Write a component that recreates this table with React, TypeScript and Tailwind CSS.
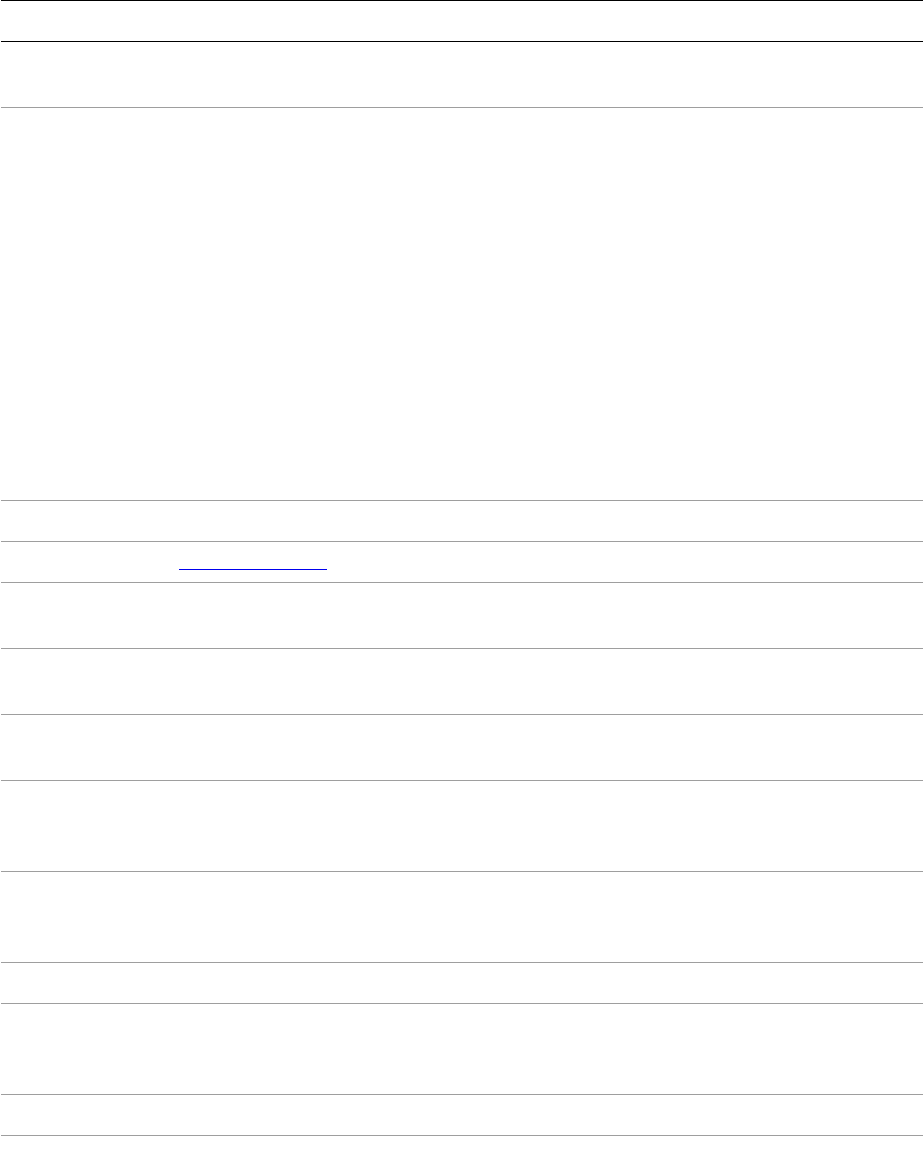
import React from 'react';

// row heights in px, each including its bottom rule
const rows = [66, 393, 41, 41, 66, 66, 66, 91, 91, 41, 91, 41];

const Row = ({ h, children }: { h: number; children?: React.ReactNode }) => (
  <div className="box-border flow-root border-b border-[#9e9e9e]" style={{ height: h }}>
    {children}
  </div>
);

const App: React.FC = () => {
  return (
    <div className="min-h-[1174px] bg-white pl-px font-['Liberation_Sans',Arial,sans-serif] text-base text-white">
      <div className="box-border h-[42px] border-y border-black" />
      {rows.map((h, i) =>
        i === 3 ? (
          <Row key={i} h={h}>
            <div className="pl-[178px] pt-[27px]">
              <div className="h-0 w-[148px] border-t border-[#0000ee]" />
            </div>
          </Row>
        ) : (
          <Row key={i} h={h} />
        )
      )}
    </div>
  );
};

export default App;
